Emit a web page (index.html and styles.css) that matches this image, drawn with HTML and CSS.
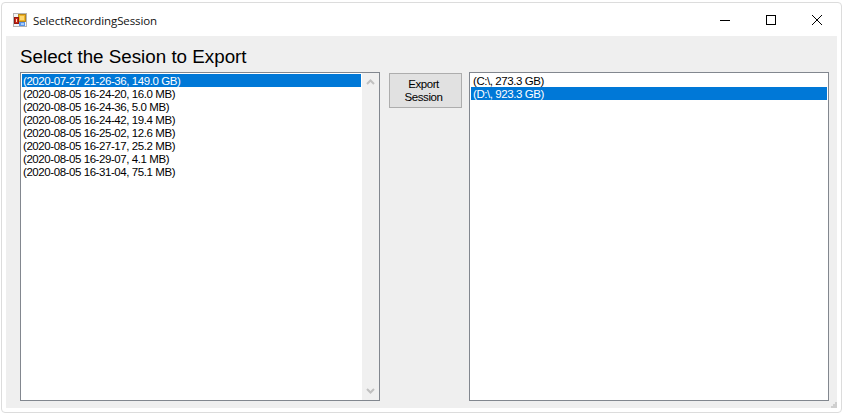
FILE: index.html
```html
<!DOCTYPE html>
<html lang="en">
<head>
<meta charset="utf-8">
<title>SelectRecordingSession</title>
<link rel="stylesheet" href="styles.css">
</head>
<body>
<div class="window">
  <header class="titlebar">
    <svg class="app-icon" width="14" height="14" viewBox="0 0 14 14" aria-hidden="true">
      <rect x="0.5" y="0.5" width="13" height="13" fill="#f4f4f4" stroke="#b4b4b4"/>
      <rect x="5.5" y="1.5" width="7" height="7" fill="#f0b428" stroke="#b8861a"/>
      <rect x="7" y="3" width="4" height="4" fill="#ffd870"/>
      <rect x="1.5" y="4.5" width="4" height="6" fill="#d02818" stroke="#901810"/>
      <rect x="3" y="6" width="1" height="3" fill="#f8e0d0"/>
      <rect x="6" y="9" width="6" height="4" fill="#5a94e8"/>
      <rect x="8" y="10" width="3" height="2" fill="#a8ccf8"/>
    </svg>
    <span class="title">SelectRecordingSession</span>
    <div class="controls">
      <span class="control">
        <svg width="10" height="10" viewBox="0 0 10 10" aria-hidden="true"><path d="M0 5.5H10" stroke="#000" stroke-width="1"/></svg>
      </span>
      <span class="control">
        <svg width="10" height="10" viewBox="0 0 10 10" aria-hidden="true"><rect x="0.5" y="0.5" width="9" height="9" fill="none" stroke="#000"/></svg>
      </span>
      <span class="control">
        <svg width="10" height="10" viewBox="0 0 10 10" aria-hidden="true"><path d="M0 0L10 10M10 0L0 10" stroke="#000" stroke-width="1"/></svg>
      </span>
    </div>
  </header>
  <main class="client">
    <h1 class="heading">Select the Sesion to Export</h1>
    <div class="panels">
      <div class="listbox listbox-left">
        <ul class="items">
          <li class="item selected">(2020-07-27 21-26-36, 149.0 GB)</li>
          <li class="item">(2020-08-05 16-24-20, 16.0 MB)</li>
          <li class="item">(2020-08-05 16-24-36, 5.0 MB)</li>
          <li class="item">(2020-08-05 16-24-42, 19.4 MB)</li>
          <li class="item">(2020-08-05 16-25-02, 12.6 MB)</li>
          <li class="item">(2020-08-05 16-27-17, 25.2 MB)</li>
          <li class="item">(2020-08-05 16-29-07, 4.1 MB)</li>
          <li class="item">(2020-08-05 16-31-04, 75.1 MB)</li>
        </ul>
        <div class="scrollbar">
          <svg width="9" height="6" viewBox="0 0 9 6" aria-hidden="true"><path d="M1 5L4.5 1.5L8 5" fill="none" stroke="#c0c0c0" stroke-width="2"/></svg>
          <svg width="9" height="6" viewBox="0 0 9 6" aria-hidden="true"><path d="M1 1L4.5 4.5L8 1" fill="none" stroke="#c0c0c0" stroke-width="2"/></svg>
        </div>
      </div>
      <button class="export" type="button">Export<br>Session</button>
      <div class="listbox listbox-right">
        <ul class="items">
          <li class="item">(C:\, 273.3 GB)</li>
          <li class="item selected">(D:\, 923.3 GB)</li>
        </ul>
      </div>
    </div>
    <svg class="grip" width="6" height="6" viewBox="0 0 6 6" aria-hidden="true">
      <path d="M4 0h2v2H4zM2 2h2v2H2zM4 2h2v2H4zM0 4h2v2H0zM2 4h2v2H2zM4 4h2v2H4z" fill="#cfcfcf"/>
    </svg>
  </main>
</div>
</body>
</html>
```
FILE: styles.css
```css
* { box-sizing: border-box; }
html, body { margin: 0; padding: 0; background: #fff; }
body { width: 845px; height: 417px; overflow: hidden; padding: 2px 3px 4px 1px; }
.window {
  width: 841px;
  height: 411px;
  display: flex;
  flex-direction: column;
  background: #fff;
  border: 1px solid #dcdcdc;
  border-radius: 4px;
  padding: 0 4px 4px 4px;
}
.titlebar {
  height: 33px;
  flex: none;
  display: flex;
  align-items: center;
  padding-left: 7px;
}
.app-icon { flex: none; margin-right: 6px; margin-top: 1px; }
.title {
  font: 11.5px/16px "Open Sans", sans-serif;
  letter-spacing: -0.1px;
  color: #111;
  margin-top: 3px;
}
.controls { margin-left: auto; display: flex; margin-right: -3px; }
.control {
  width: 46px;
  height: 30px;
  display: flex;
  align-items: center;
  justify-content: center;
}
.client {
  flex: 1;
  background: #efefef;
  padding: 10px 8px 7px 14px;
  display: flex;
  flex-direction: column;
  position: relative;
}
.heading {
  margin: 0 0 4px 0;
  font: 400 18.8px/22px "Liberation Sans", Arial, sans-serif;
  color: #000;
}
.panels { display: flex; align-items: flex-start; flex: 1; }
.listbox {
  width: 360px;
  height: 329px;
  background: #fff;
  border: 1px solid #82878f;
  display: flex;
  padding: 1px 0 0 1px;
}
.items {
  list-style: none;
  margin: 0;
  padding: 0;
  flex: 1;
  font: 11.5px/13px "Liberation Sans", Arial, sans-serif;
  letter-spacing: -0.43px;
  color: #000;
}
.listbox-right .items { margin-right: 1px; }
.item { height: 13px; padding: 1px 0 0 1px; white-space: nowrap; }
.listbox-right .item { padding-left: 2px; }
.item.selected { background: #0078d7; color: #fff; }
.scrollbar {
  width: 17px;
  margin: -1px 0 0 1px;
  background: #f0f0f0;
  display: flex;
  flex-direction: column;
  justify-content: space-between;
  align-items: center;
  padding: 6px 0 6px;
}
.export {
  width: 73px;
  height: 35px;
  margin: 1px 7px 0 9px;
  padding: 0 4px 0 0;
  flex: none;
  background: #e1e1e1;
  border: 1px solid #adadad;
  font: 11.5px/13px "Liberation Sans", Arial, sans-serif;
  letter-spacing: -0.43px;
  color: #000;
}
.grip { position: absolute; right: 0; bottom: 0; }
```
